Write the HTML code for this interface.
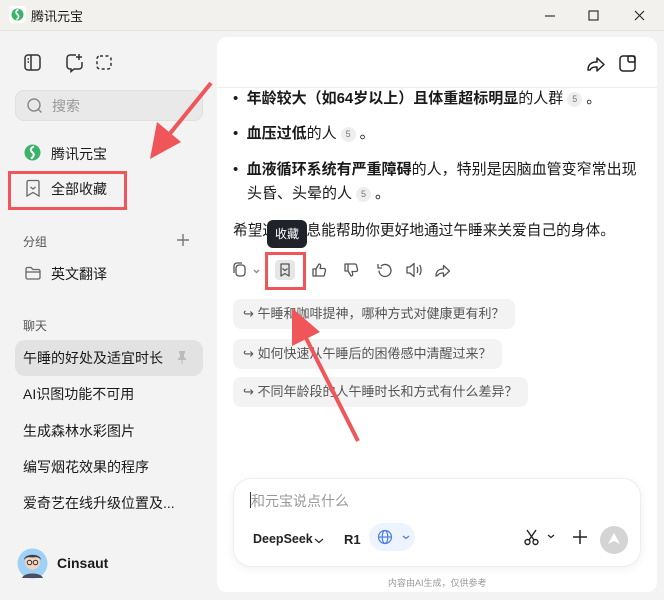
<!DOCTYPE html>
<html><head><meta charset="utf-8">
<style>
*{margin:0;padding:0;box-sizing:border-box}
body{width:664px;height:600px;overflow:hidden;background:#f3f3f3;font-family:"Liberation Sans","Noto Sans CJK SC",sans-serif;color:#1a1a1a;position:relative}
.a{position:absolute}
.t{font-size:14px;white-space:nowrap}
.title{left:0;top:0;width:664px;height:31px;background:#f3f1ee;border-bottom:1px solid #e4e2df}
.main{left:217px;top:37px;width:440px;height:555px;background:#fff;border-radius:10px;overflow:hidden}
.cite{display:inline-block;width:15px;height:15px;border-radius:8px;background:#eee;color:#777;font-size:9px;text-align:center;line-height:15px;vertical-align:1px;font-weight:normal;margin:0 4px}
.chip{background:#f3f3f3;border-radius:8px;height:30px;line-height:30px;padding:0 10px;font-size:13px;color:#555}
svg{overflow:visible}
.b{font-size:15px;line-height:20px}
</style></head><body>
<div class="a title"></div>
<svg class="a" style="left:9px;top:6px" width="17" height="17" viewBox="0 0 17 17"><rect width="17" height="17" rx="4" fill="#fff"/><circle cx="8.5" cy="8.5" r="6" fill="#3cb36b"/><path d="M9.5 3.5c-3 1-3 3.5-1 5s1 4-1 5" stroke="#fff" stroke-width="1.6" fill="none"/></svg>
<div class="a t" style="left:31px;top:6px;font-size:13px">腾讯元宝</div>
<svg class="a" style="left:543px;top:9px" width="110" height="14" stroke="#222" fill="none" stroke-width="1.1"><path d="M2 7h10"/><rect x="46" y="2" width="9" height="9"/><path d="M92 2l9 9M101 2l-9 9"/></svg>

<svg class="a" style="left:24px;top:54px" width="100" height="18" stroke="#333" fill="none" stroke-width="1.5"><rect x="1" y="1" width="15" height="15" rx="3"/><path d="M7 1v15M3.5 5h1.5M3.5 8h1.5"/><path d="M52 1h-6a3 3 0 0 0-3 3v8a3 3 0 0 0 3 3h1v2.5l3-2.5h5a3 3 0 0 0 3-3v-4M55 0v6M52 3h6"/><rect x="73" y="2" width="14" height="13" rx="3" stroke-dasharray="3 2.5"/></svg>
<div class="a" style="left:15px;top:90px;width:188px;height:31px;background:#e9e9e9;border:1px solid #e0e0e0;border-radius:9px"></div>
<svg class="a" style="left:27px;top:98px" width="16" height="16" stroke="#888" fill="none" stroke-width="1.4"><circle cx="7" cy="7" r="6"/><path d="M11.5 11.5l3 3"/></svg>
<div class="a t" style="left:52px;top:96px;color:#999">搜索</div>
<svg class="a" style="left:24px;top:144px" width="17" height="17" viewBox="0 0 17 17"><circle cx="8.5" cy="8.5" r="8" fill="#3cb36b"/><path d="M10 2.5c-4 1.5-4 4-1.5 6s1 4.5-1.5 6" stroke="#fff" stroke-width="2" fill="none"/></svg>
<div class="a t" style="left:51px;top:144px">腾讯元宝</div>
<svg class="a" style="left:26px;top:180px" width="14" height="17" stroke="#666" fill="none" stroke-width="1.3"><path d="M1 2a1.5 1.5 0 0 1 1.5-1.5h9A1.5 1.5 0 0 1 13 2v14l-6-3.5L1 16z"/><path d="M4.5 7l2.5 2 2.5-2"/></svg>
<div class="a t" style="left:51px;top:179px">全部收藏</div>
<div class="a" style="left:8px;top:171px;width:119px;height:39px;border:3px solid #f0555a"></div>
<div class="a t" style="left:23px;top:233px;font-size:12px;color:#555">分组</div>
<svg class="a" style="left:177px;top:234px" width="12" height="12" stroke="#777" stroke-width="1.4"><path d="M6 0v12M0 6h12"/></svg>
<svg class="a" style="left:25px;top:266px" width="16" height="14" stroke="#666" fill="none" stroke-width="1.3"><path d="M1 3a1.5 1.5 0 0 1 1.5-1.5h3.5l2 2h5.5A1.5 1.5 0 0 1 15 5v6.5a1.5 1.5 0 0 1-1.5 1.5h-11A1.5 1.5 0 0 1 1 11.5z"/><path d="M1 6h14"/></svg>
<div class="a t" style="left:51px;top:264px">英文翻译</div>
<div class="a t" style="left:23px;top:317px;font-size:12px;color:#555">聊天</div>
<div class="a" style="left:15px;top:340px;width:188px;height:36px;background:#e2e2e2;border-radius:10px"></div>
<div class="a t" style="left:23px;top:348px">午睡的好处及适宜时长</div>
<svg class="a" style="left:177px;top:351px" width="10" height="13" fill="#bbb"><path d="M2 0h6v2l-1 1v3l2 2v1H1V8l2-2V3L2 2zM4.5 9h1v4h-1z"/></svg>
<div class="a t" style="left:23px;top:384px">AI识图功能不可用</div>
<div class="a t" style="left:23px;top:421px">生成森林水彩图片</div>
<div class="a t" style="left:23px;top:457px">编写烟花效果的程序</div>
<div class="a t" style="left:23px;top:493px">爱奇艺在线升级位置及...</div>
<svg class="a" style="left:17px;top:548px" width="31" height="31" viewBox="0 0 31 31"><circle cx="15.5" cy="15.5" r="15" fill="#9fd0f5"/><circle cx="15.5" cy="14" r="7.5" fill="#f4d6c0"/><path d="M7 12c0-7 17-7 17 0c-2-3-5-3-8.5-2.5C12 9 9 9 7 12z" fill="#3a3f4a"/><circle cx="12.5" cy="14.5" r="2.3" fill="none" stroke="#333"/><circle cx="18.5" cy="14.5" r="2.3" fill="none" stroke="#333"/><path d="M5 30c2-6 19-6 21 0" fill="#4a5060"/></svg>
<div class="a t" style="left:57px;top:555px;font-weight:bold">Cinsaut</div>

<div class="a main">
 <div class="a" style="left:0;top:50px;width:440px;height:1px;background:#eee"></div>
 <svg class="a" style="left:370px;top:17px" width="70" height="20" stroke="#222" fill="none" stroke-width="1.5"><path d="M1 16c0-5 3-8 8-8h1V4l7 6.5-7 6.5v-4h-1c-3 0-5 1-6 3z" stroke-linejoin="round"/><rect x="33" y="2" width="15" height="15" rx="3"/><rect x="41" y="2" width="7" height="6" rx="1.5"/></svg>
 <div class="a t b" style="left:16px;top:52px">•&nbsp; <b>年龄较大（如64岁以上）且体重超标明显</b>的人群<span class="cite">5</span>。</div>
 <div class="a t b" style="left:16px;top:87px">•&nbsp; <b>血压过低</b>的人<span class="cite">5</span>。</div>
 <div class="a t b" style="left:16px;top:123px">•&nbsp; <b>血液循环系统有严重障碍</b>的人，特别是因脑血管变窄常出现</div>
 <div class="a t b" style="left:30px;top:147px">头昏、头晕的人<span class="cite">5</span>。</div>
 <div class="a t b" style="left:16px;top:184px;font-size:14.7px">希望这些信息能帮助你更好地通过午睡来关爱自己的身体。</div>
 <div class="a" style="left:50px;top:183px;width:40px;height:28px;background:#1f2229;border-radius:6px;color:#fff;font-size:12px;text-align:center;line-height:28px">收藏</div>
 <div class="a" style="left:58px;top:223px;width:20px;height:20px;background:#e6e6e6;border-radius:4px"></div>
 <svg class="a" style="left:14px;top:224px" width="220" height="18" stroke="#555" fill="none" stroke-width="1.3" stroke-linejoin="round"><rect x="5" y="4" width="9" height="11" rx="3"/><path d="M3 12V5a3 3 0 0 1 3-3h5"/><path d="M23 9l2.5 2.5L28 9" stroke="#888"/><path d="M50 3h8v12l-4-2.5-4 2.5z"/><path d="M51.5 7.5l2.5 2 2.5-2"/><path d="M82 8h3v7h-3zM85 8l3-5c1.5 0 2 1 1.5 3l-.5 1.5h4a1.5 1.5 0 0 1 1.5 1.8l-1 4.5a1.5 1.5 0 0 1-1.5 1.2H85"/><path d="M114 3h3v7h-3zM117 10l3 5c1.5 0 2-1 1.5-3l-.5-1.5h4a1.5 1.5 0 0 0 1.5-1.8l-1-4.5a1.5 1.5 0 0 0-1.5-1.2H117"/><path d="M150 5a6 6 0 1 1-2 4.5M147 3v4h4"/><path d="M176 6h3l4-3.5v13L179 12h-3zM186 6c1 1.5 1 4.5 0 6M188.5 4c2 2.5 2 7.5 0 10"/><path d="M205 15c0-4.5 2.5-7 7-7h.5V4.5l6 5.5-6 5.5V12h-.5c-2.5 0-4.5.8-5.5 2.5z"/></svg>
 <div class="a" style="left:48px;top:215px;width:41px;height:38px;border:3px solid #f0555a"></div>
 <div class="a chip" style="left:16px;top:262px">↪ 午睡和咖啡提神，哪种方式对健康更有利？</div>
 <div class="a chip" style="left:16px;top:302px">↪ 如何快速从午睡后的困倦感中清醒过来？</div>
 <div class="a chip" style="left:16px;top:340px">↪ 不同年龄段的人午睡时长和方式有什么差异？</div>
 <div class="a" style="left:16px;top:441px;width:408px;height:89px;border-radius:18px;background:#fff;border:1px solid #eee;box-shadow:0 2px 10px rgba(0,0,0,0.06)"></div>
 <div class="a" style="left:33px;top:455px;width:1px;height:16px;background:#333"></div>
 <div class="a t" style="left:34px;top:454px;color:#999">和元宝说点什么</div>
 <div class="a t" style="left:36px;top:495px;font-size:12.5px;font-weight:bold;color:#222">DeepSeek</div>
 <svg class="a" style="left:97px;top:500px" width="10" height="8" stroke="#333" fill="none" stroke-width="1.3"><path d="M1 2l4 3.5L9 2"/></svg>
 <div class="a t" style="left:127px;top:495px;font-size:13px;font-weight:bold;color:#222">R1</div>
 <div class="a" style="left:152px;top:486px;width:46px;height:28px;background:#eef4ff;border-radius:14px"></div>
 <svg class="a" style="left:161px;top:493px" width="40" height="15" stroke="#4a7ce8" fill="none" stroke-width="1.2"><circle cx="7" cy="7" r="6.5"/><ellipse cx="7" cy="7" rx="2.8" ry="6.5"/><path d="M.5 7h13"/><path d="M25 6l3 2.5L31 6"/></svg>
 <svg class="a" style="left:307px;top:492px" width="90" height="17" stroke="#222" fill="none" stroke-width="1.4"><circle cx="3.5" cy="13" r="2.5"/><circle cx="11.5" cy="13" r="2.5"/><path d="M5 11L12 1M10 11L3 1"/><path d="M24 6l3 2.5L30 6" stroke-width="1.2"/><path d="M56 1v14M49 8h14" stroke-width="1.5"/></svg>
 <svg class="a" style="left:383px;top:489px" width="28" height="28"><circle cx="14" cy="14" r="14" fill="#d4d4d4"/><path d="M14 7l6 11-6-3-6 3z" fill="#fff"/></svg>
 <div class="a t" style="left:171px;top:539px;font-size:9px;color:#999">内容由AI生成，仅供参考</div>
</div>

<svg class="a" style="left:0;top:0" width="664" height="600">
 <path d="M211 83L168 136" stroke="#f0555a" stroke-width="4"/>
 <path d="M150 159l7-37 24 20z" fill="#f0555a"/>
 <path d="M358 441L306 338" stroke="#f0555a" stroke-width="4"/>
 <path d="M292 308l0 38 28-14z" fill="#f0555a"/>
</svg>
</body></html>
